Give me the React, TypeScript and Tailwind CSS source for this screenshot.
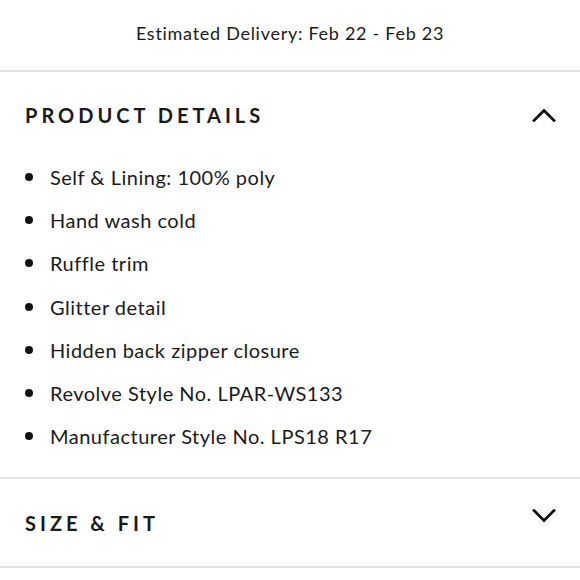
const items = [
  "Self & Lining: 100% poly",
  "Hand wash cold",
  "Ruffle trim",
  "Glitter detail",
  "Hidden back zipper closure",
  "Revolve Style No. LPAR-WS133",
  "Manufacturer Style No. LPS18 R17",
];

function Chevron({ up }: { up?: boolean }) {
  return (
    <svg width="24" height="14" viewBox="0 0 24 14" fill="none" className="block">
      <path
        d={up ? "M2 12.5 L12 2.5 L22 12.5" : "M2 1.5 L12 11.5 L22 1.5"}
        stroke="#111"
        strokeWidth="2.7"
        strokeLinecap="square"
      />
    </svg>
  );
}

export default function App() {
  return (
    <div
      className="w-[580px] h-[580px] bg-white text-[#1a1a1a] overflow-hidden"
      style={{ fontFamily: "Lato, 'Noto Sans', sans-serif" }}
    >
      {/* delivery */}
      <div className="h-[72px] flex items-start justify-center pt-[20px] border-b-2 border-[#e2e2e2]">
        <p className="text-[18px] leading-[26px] tracking-[0.04em]">Estimated Delivery: Feb 22 - Feb 23</p>
      </div>

      {/* product details */}
      <section className="border-b-2 border-[#e2e2e2] pb-[19px]">
        <div className="flex items-center justify-between pl-[25px] pr-[24px] pt-[28px] h-[57px]">
          <h2 className="text-[20px] leading-[28px] font-bold tracking-[0.2em]">PRODUCT DETAILS</h2>
          <Chevron up />
        </div>
        <ul className="mt-[26px]">
          {items.map((t) => (
            <li key={t} className="h-[43.3px] flex items-center pl-[25px] text-[20px] tracking-[0.025em]">
              <span className="w-[8px] h-[8px] rounded-full bg-[#111] mr-[17px]" />
              {t}
            </li>
          ))}
        </ul>
      </section>

      {/* size & fit */}
      <section className="border-b-2 border-[#e2e2e2]">
        <div className="flex items-center justify-between pl-[25px] pr-[24px] h-[87px]">
          <h2 className="text-[20px] leading-[28px] font-bold tracking-[0.2em]">SIZE &amp; FIT</h2>
          <div className="mb-[13px]">
            <Chevron />
          </div>
        </div>
      </section>
    </div>
  );
}
